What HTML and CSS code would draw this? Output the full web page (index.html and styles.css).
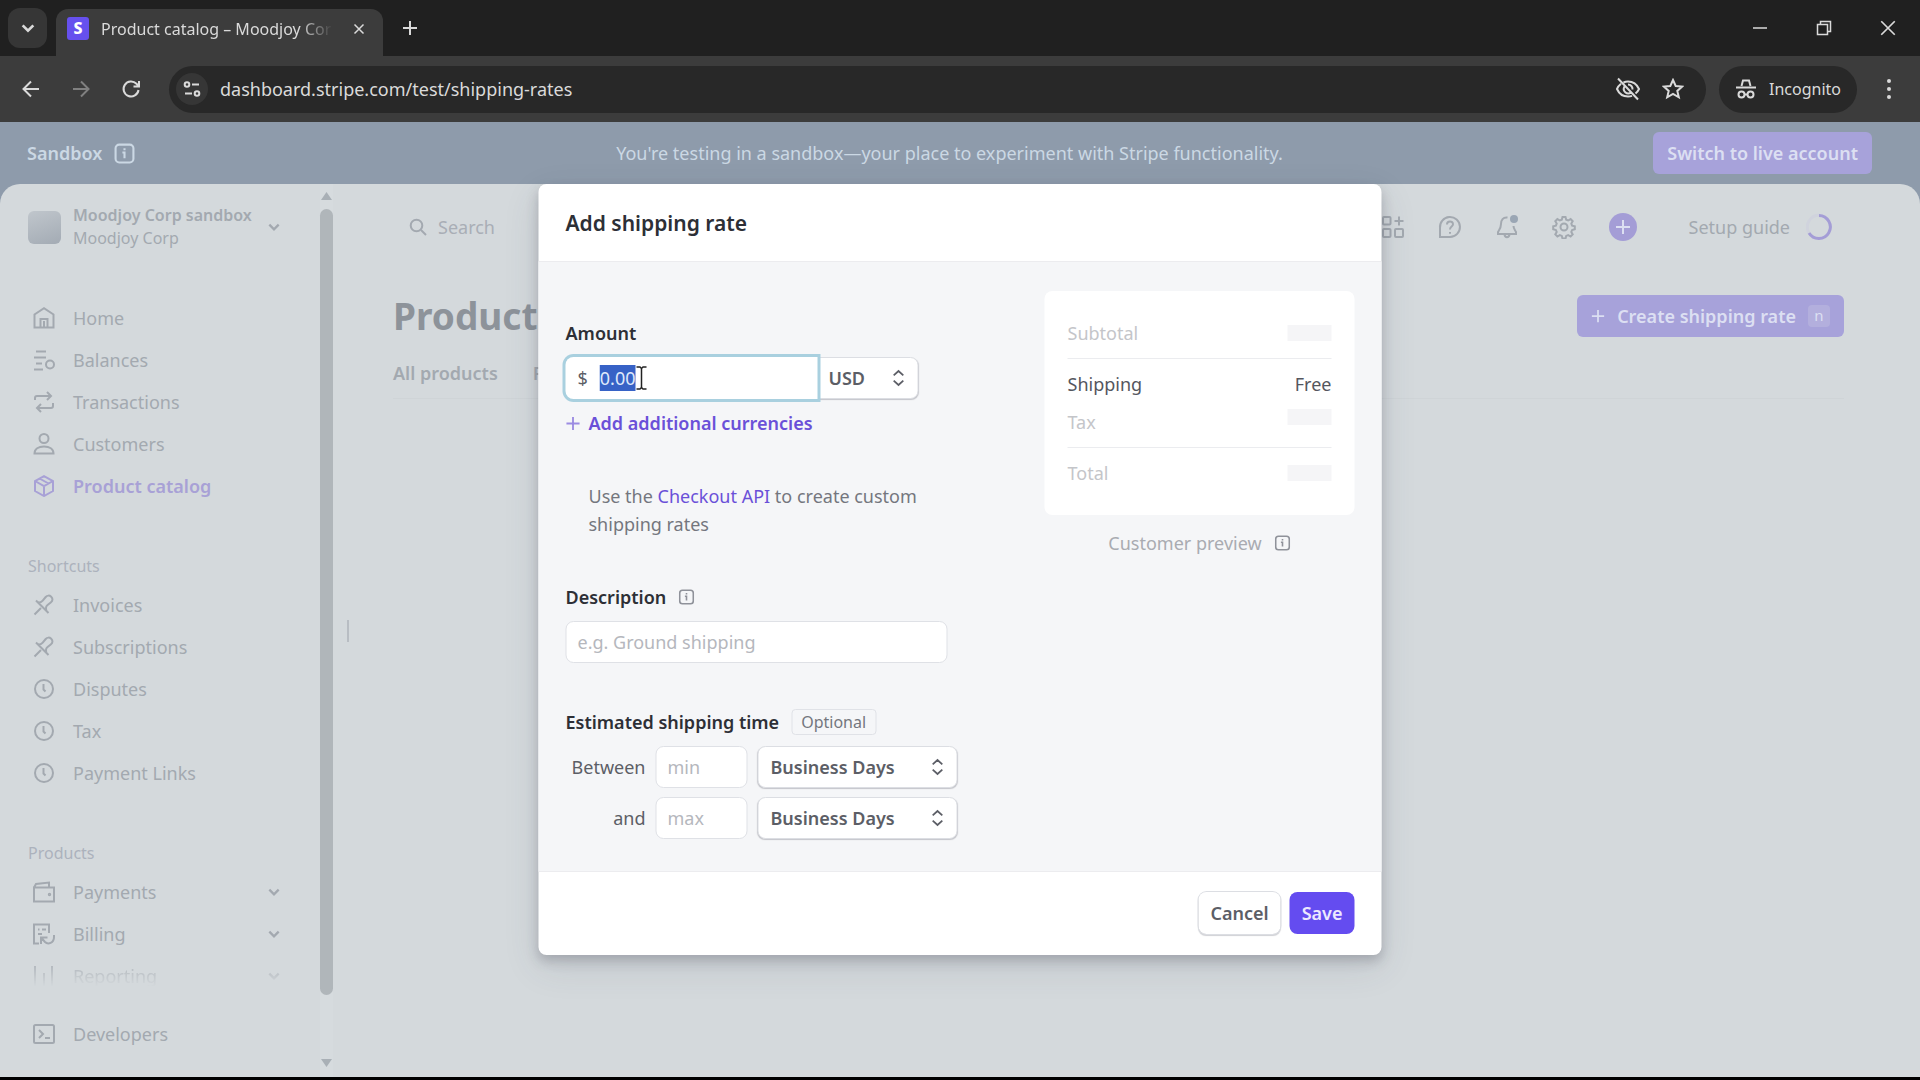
FILE: index.html
```
<!DOCTYPE html>
<html lang="en">
<head>
    <meta charset="UTF-8">
    <meta name="viewport" content="width=device-width, initial-scale=1.0">
    <title>Product catalog – Moodjoy Corp</title>
    <link rel="stylesheet" href="styles.css">
</head>
<body>
    <!-- shared icons -->
    <svg class="sprite" aria-hidden="true">
        <symbol id="i-chevron" viewBox="0 0 12 12"><path d="M2 4l4 4 4-4"/></symbol>
        <symbol id="i-updown" viewBox="0 0 16 20"><path d="M2.500 7L8 2l5.500 5M2.500 13L8 18l5.500-5"/></symbol>
        <symbol id="i-info" viewBox="0 0 20 20"><rect x="1.500" y="1.500" width="17" height="17" rx="3.500"/><path d="M8 9h2v5.500M10 5v1.800"/></symbol>
        <symbol id="i-plus" viewBox="0 0 16 16"><path d="M8 1v14M1 8h14"/></symbol>
        <symbol id="i-x" viewBox="0 0 16 16"><path d="M2 2l12 12M14 2L2 14"/></symbol>
        <symbol id="i-pin" viewBox="0 0 22 22"><path d="M1.500 20.500l6.500-6.500M3 6.500l12.500 12.500M4.500 8c2 .8 4 .2 5.200-1.300l3-3.700c1.500-1.800 3.800-1.800 5.500-.2s1.700 4-.2 5.500l-3.700 3c-1.500 1.200-1.500 3.700-.8 6"/></symbol>
        <symbol id="i-clock" viewBox="0 0 22 22"><circle cx="11" cy="11" r="9"/><path d="M10.500 6v5.500l2 2"/></symbol>
    </svg>

    <header class="browser">
        <div class="tab-strip">
            <button class="tab-search" aria-label="Search tabs"><svg width="16" height="16"><use href="#i-chevron"/></svg></button>
            <div class="tab">
                <span class="favicon">S</span>
                <span class="tab-title">Product catalog – Moodjoy Corp</span>
                <button class="tab-close" aria-label="Close tab"><svg width="12" height="12"><use href="#i-x"/></svg></button>
            </div>
            <button class="new-tab" aria-label="New tab"><svg width="16" height="16"><use href="#i-plus"/></svg></button>
            <div class="window-controls">
                <button aria-label="Minimize"><svg width="16" height="16" viewBox="0 0 16 16"><path d="M1 8h14"/></svg></button>
                <button aria-label="Restore"><svg width="16" height="16" viewBox="0 0 16 16"><path d="M1.500 4.500h10v10h-10zM4.500 4V1.500h10v10H12"/></svg></button>
                <button aria-label="Close"><svg width="18" height="18"><use href="#i-x"/></svg></button>
            </div>
        </div>
        <div class="toolbar">
            <button aria-label="Back"><svg width="20" height="20" viewBox="0 0 20 20"><path d="M18 10H3M10 2.500L2.500 10l7.500 7.500"/></svg></button>
            <button class="off" aria-label="Forward"><svg width="20" height="20" viewBox="0 0 20 20"><path d="M2 10h15M10 2.500l7.500 7.500-7.500 7.500"/></svg></button>
            <button aria-label="Reload"><svg width="20" height="20" viewBox="0 0 20 20"><path d="M17.500 11a7.500 7.500 0 1 1-2-6.200L18 7.500M18 2v5.500h-5.500"/></svg></button>
            <div class="address">
                <span class="site-info"><svg width="20" height="20" viewBox="0 0 20 20"><circle cx="5" cy="5.500" r="2.300"/><path d="M10 5.500h7M3 14.500h7"/><circle cx="15" cy="14.500" r="2.300"/></svg></span>
                <input class="url" type="text" aria-label="Address" value="dashboard.stripe.com/test/shipping-rates">
                <svg class="eye" width="26" height="24" viewBox="0 0 26 24"><path d="M8.500 5.500C10 4.800 11.500 4.500 13 4.500c5 0 9 3 11 7.500-.8 1.800-2 3.300-3.500 4.500M17 18.800c-1.200.5-2.600.7-4 .7-5 0-9-3-11-7.500C3 9.700 4.500 8 6 6.800M9.500 9.500a4.500 4.500 0 0 0 6.500 6M13 7.500a4.500 4.500 0 0 1 4.500 5M3 1.500l20 21"/></svg>
                <svg width="22" height="22" viewBox="0 0 22 22"><path d="M11 2l2.700 6 6.500.6-4.900 4.300 1.500 6.400-5.800-3.400-5.800 3.400 1.500-6.400L1.800 8.600l6.500-.6z"/></svg>
            </div>
            <div class="incognito">
                <svg width="22" height="22" viewBox="0 0 22 22"><path d="M6.500 8L8 2.500h6L15.500 8M1 9.500h20"/><circle cx="6.500" cy="16.500" r="3"/><circle cx="15.500" cy="16.500" r="3"/><path d="M9.500 16.500h3"/></svg>
                Incognito
            </div>
            <button class="more" aria-label="Menu"><svg width="6" height="22" viewBox="0 0 6 22"><circle cx="3" cy="3" r="2"/><circle cx="3" cy="11" r="2"/><circle cx="3" cy="19" r="2"/></svg></button>
        </div>
    </header>

    <div class="banner">
        <div class="banner-label">Sandbox <svg width="21" height="21"><use href="#i-info"/></svg></div>
        <p>You're testing in a sandbox—your place to experiment with Stripe functionality.</p>
        <button class="faded-button">Switch to live account</button>
    </div>

    <div class="page">
        <div class="app">
            <aside class="sidebar">
                <nav class="side-nav">
                    <button class="account">
                        <span class="avatar"></span>
                        <span class="account-name"><strong>Moodjoy Corp sandbox</strong><span>Moodjoy Corp</span></span>
                        <svg class="chevron" width="14" height="14"><use href="#i-chevron"/></svg>
                    </button>
                    <div class="group">
                        <a href="#"><svg width="22" height="22" viewBox="0 0 22 22"><path d="M1.500 20.500V7.500L11 1.200l9.500 6.300v13zM7.500 20v-8h7v8M11 14v6"/></svg>Home</a>
                        <a href="#"><svg width="22" height="22" viewBox="0 0 22 22"><path d="M3 2.500h10M1 8.500h12M3 14.500h6M1 20.500h9"/><circle cx="17" cy="15.500" r="4"/></svg>Balances</a>
                        <a href="#"><svg width="22" height="22" viewBox="0 0 22 22"><path d="M2 9V7q0-2 2-2h14M14 1l4 4-4 4M20 12v3q0 2-2 2H4M8 13l-4 4 4 4"/></svg>Transactions</a>
                        <a href="#"><svg width="22" height="22" viewBox="0 0 22 22"><circle cx="11" cy="5.500" r="4.500"/><path d="M1.500 20.500c0-4.500 4-7 9.500-7s9.500 2.500 9.500 7z"/></svg>Customers</a>
                        <a href="#" class="active"><svg width="22" height="22" viewBox="0 0 22 22"><path d="M11 1.200l9 4.800v10l-9 5-9-5V6zM2 6l9 5 9-5M11 11v10M6.500 3.500l9 5"/></svg>Product catalog</a>
                    </div>
                    <div class="group">
                        <h2>Shortcuts</h2>
                        <a href="#"><svg width="22" height="22"><use href="#i-pin"/></svg>Invoices</a>
                        <a href="#"><svg width="22" height="22"><use href="#i-pin"/></svg>Subscriptions</a>
                        <a href="#"><svg width="22" height="22"><use href="#i-clock"/></svg>Disputes</a>
                        <a href="#"><svg width="22" height="22"><use href="#i-clock"/></svg>Tax</a>
                        <a href="#"><svg width="22" height="22"><use href="#i-clock"/></svg>Payment Links</a>
                    </div>
                    <div class="group">
                        <h2>Products</h2>
                        <a href="#"><svg width="22" height="22" viewBox="0 0 22 22"><path d="M1 6.500h20v14H1zM1 6.500l2-3.500 13-1.500v5"/><circle cx="16.500" cy="13.500" r=".7"/></svg>Payments<svg class="chevron" width="14" height="14"><use href="#i-chevron"/></svg></a>
                        <a href="#"><svg width="22" height="22" viewBox="0 0 22 22"><path d="M6 20.500H1V1.500h15V10M5 6.500h1.500M9 6.500h4M5 11h4M8 21v-6.500h6.500M8.500 15l3.500 4c3 3 9 1 9-5v-2"/></svg>Billing<svg class="chevron" width="14" height="14"><use href="#i-chevron"/></svg></a>
                        <a href="#" class="fading"><svg width="22" height="22" viewBox="0 0 22 22"><path d="M2 1v20M11 8v13M19 1v20"/></svg>Reporting<svg class="chevron" width="14" height="14"><use href="#i-chevron"/></svg></a>
                    </div>
                    <a href="#" class="developers"><svg width="22" height="22" viewBox="0 0 22 22"><rect x="1" y="2" width="20" height="18" rx="1.500"/><path d="M6 7l4 4-4 4M12 15h5"/></svg>Developers</a>
                </nav>
                <div class="scrollbar">
                    <svg width="11" height="8" viewBox="0 0 11 8"><path d="M5.500 0L11 8H0z"/></svg>
                    <div class="thumb"></div>
                    <svg class="down" width="11" height="8" viewBox="0 0 11 8"><path d="M5.500 8L11 0H0z"/></svg>
                </div>
                <div class="resizer"></div>
            </aside>

            <main>
                <div class="topbar">
                    <label class="search">
                        <svg width="18" height="18" viewBox="0 0 18 18"><circle cx="7.500" cy="7.500" r="5.800"/><path d="M12 12l5 5"/></svg>
                        <input type="text" placeholder="Search">
                    </label>
                    <button class="icon-button" aria-label="Apps"><svg width="24" height="24" viewBox="0 0 24 24"><rect x="2" y="2" width="7.500" height="7.500" rx="1"/><rect x="2" y="14" width="7.500" height="8" rx="1"/><rect x="14" y="14" width="8" height="8" rx="1"/><path d="M18 1.500v9M13.500 6h9"/></svg></button>
                    <button class="icon-button" aria-label="Help"><svg width="24" height="24" viewBox="0 0 24 24"><path d="M2 22v-9A10 10 0 1 1 12 22zM9 9.500c0-4 6-4 6-.3 0 2.500-3 2.300-3 5.300M12 17v1.800"/></svg></button>
                    <button class="icon-button" aria-label="Notifications"><svg width="24" height="24" viewBox="0 0 24 24"><path d="M12.500 2.500C8 2 6 5 6 9c0 4-1.500 5.500-3 8v2h18v-2c-1-2-2.500-3.500-2.500-6M9.500 19.500c.5 3.500 4.500 3.500 5 0"/><circle class="dot" cx="19" cy="4" r="4"/></svg></button>
                    <button class="icon-button" aria-label="Settings"><svg width="24" height="24" viewBox="0 0 24 24"><circle cx="12" cy="12" r="3.500"/><path d="M10.500 2h3l.7 2.700 2 .8 2.400-1.400 2.100 2.100-1.400 2.400.8 2 2.700.7v3l-2.700.7-.8 2 1.400 2.400-2.100 2.100-2.400-1.400-2 .8-.7 2.700h-3l-.7-2.700-2-.8-2.400 1.400-2.100-2.100 1.400-2.400-.8-2L1.200 14.300v-3l2.700-.7.8-2-1.400-2.400 2.100-2.100 2.400 1.400 2-.8z"/></svg></button>
                    <button class="create-round" aria-label="Create"><svg width="16" height="16"><use href="#i-plus"/></svg></button>
                    <button class="setup">Setup guide <svg width="26" height="28" viewBox="0 0 26 28"><path class="ring-track" d="M13 2a12 12 0 0 0-10 18"/><path d="M13 2.500a11.500 11.500 0 1 1-10 17.500"/></svg></button>
                </div>
                <div class="heading">
                    <h1>Product catalog</h1>
                    <button class="faded-button create"><svg width="14" height="14"><use href="#i-plus"/></svg>Create shipping rate <kbd>n</kbd></button>
                </div>
                <div class="tabs">
                    <a href="#">All products</a>
                    <a href="#">Features</a>
                </div>
            </main>
        </div>

        <form class="modal" role="dialog" aria-labelledby="modal-title">
            <div class="modal-header"><h2 id="modal-title">Add shipping rate</h2></div>
            <div class="modal-body">
                <div class="fields">
                    <div class="field">
                        <label for="amount">Amount</label>
                        <div class="amount-row">
                            <div class="amount-box">
                                <span>$</span>
                                <input id="amount" type="text" value="0.00" autofocus>
                                <svg class="ibeam" width="12" height="24" viewBox="0 0 12 24"><path d="M1 1h3.500L6 2.500 7.500 1H11M1 23h3.500L6 21.500 7.500 23H11M6 2.500v19"/></svg>
                            </div>
                            <div class="select currency">
                                <select aria-label="Currency"><option>USD</option></select>
                                <svg width="14" height="18"><use href="#i-updown"/></svg>
                            </div>
                        </div>
                        <a href="#" class="add-link"><svg width="15" height="15"><use href="#i-plus"/></svg>Add additional currencies</a>
                    </div>

                    <p class="hint">Use the <a href="#">Checkout API</a> to create custom shipping rates</p>

                    <div class="field">
                        <div class="label-row">
                            <label for="description">Description</label>
                            <svg class="info" width="16" height="16"><use href="#i-info"/></svg>
                        </div>
                        <input id="description" class="text-input" type="text" placeholder="e.g. Ground shipping">
                    </div>

                    <div class="field">
                        <div class="label-row">
                            <span class="label">Estimated shipping time</span>
                            <span class="badge">Optional</span>
                        </div>
                        <div class="time-grid">
                            <label for="min">Between</label>
                            <input id="min" class="text-input" type="text" placeholder="min">
                            <div class="select">
                                <select aria-label="Minimum unit"><option>Business Days</option></select>
                                <svg width="14" height="18"><use href="#i-updown"/></svg>
                            </div>
                            <label for="max">and</label>
                            <input id="max" class="text-input" type="text" placeholder="max">
                            <div class="select">
                                <select aria-label="Maximum unit"><option>Business Days</option></select>
                                <svg width="14" height="18"><use href="#i-updown"/></svg>
                            </div>
                        </div>
                    </div>
                </div>

                <div class="preview">
                    <div class="receipt">
                        <div class="line">Subtotal <i></i></div>
                        <hr>
                        <div class="line strong">Shipping <span>Free</span></div>
                        <div class="line">Tax <i></i></div>
                        <hr>
                        <div class="line">Total <i></i></div>
                    </div>
                    <div class="caption">Customer preview <svg class="info" width="16" height="16"><use href="#i-info"/></svg></div>
                </div>
            </div>
            <div class="modal-footer">
                <button type="button" class="cancel">Cancel</button>
                <button type="button" class="save">Save</button>
            </div>
        </form>
    </div>

    <script>
        // the amount is preselected so typing replaces it
        const amount = document.getElementById('amount');
        amount.focus();
        amount.select();
    </script>
</body>
</html>
```
FILE: styles.css
```
* {
    box-sizing: border-box;
}
body {
    margin: 0;
    min-height: 100vh;
    display: flex;
    flex-direction: column;
    padding-bottom: 3px;
    background: #000;
    font-family: "Noto Sans", "Open Sans", sans-serif;
    font-size: 18px;
    line-height: 26px;
}
h1, h2, p {
    margin: 0;
}
button, input, select {
    font: inherit;
    color: inherit;
}
button {
    display: flex;
    align-items: center;
    justify-content: center;
    padding: 0;
    border: none;
    background: none;
    cursor: pointer;
    white-space: nowrap;
}
input {
    min-width: 0;
    border: none;
    outline: none;
    background: none;
    padding: 0;
}
a {
    text-decoration: none;
    color: inherit;
}
svg {
    flex: none;
    fill: none;
    stroke: currentColor;
    stroke-width: 2;
}
.sprite {
    position: absolute;
    width: 0;
    height: 0;
}

/* browser window */
.browser {
    background: #3c3c3c;
    color: #dadada;
}
.tab-strip {
    display: flex;
    align-items: center;
    height: 56px;
    padding-left: 8px;
    background: #202020;
}
.tab-search {
    width: 39px;
    height: 40px;
    border-radius: 12px;
    background: #363636;
}
.tab {
    display: flex;
    align-items: center;
    align-self: flex-end;
    width: 327px;
    height: 47px;
    margin-left: 9px;
    padding: 0 18px 8px 11px;
    border-radius: 12px 12px 0 0;
    background: #3c3c3c;
    font-size: 16px;
}
.favicon {
    width: 22px;
    height: 23px;
    border-radius: 3px;
    background: #6650ee;
    color: #fff;
    font-weight: 800;
    line-height: 22px;
    text-align: center;
}
.tab-title {
    flex: 1;
    margin: 0 20px 0 12px;
    overflow: hidden;
    white-space: nowrap;
    mask-image: linear-gradient(to right, #000 85%, transparent);
}
.new-tab {
    margin-left: 19px;
}
.window-controls {
    display: flex;
    margin-left: auto;
}
.window-controls button {
    width: 64px;
    height: 56px;
}
.window-controls svg {
    stroke-width: 1.5;
}
.toolbar {
    display: flex;
    align-items: center;
    height: 66px;
    padding: 0 28px 0 21px;
}
.toolbar > button {
    width: 20px;
    margin-right: 30px;
}
.toolbar .off {
    color: #808080;
}
.address {
    flex: 1;
    display: flex;
    align-items: center;
    height: 47px;
    margin-left: -2px;
    padding: 0 22px 0 7px;
    border-radius: 24px;
    background: #282828;
}
.site-info {
    display: flex;
    align-items: center;
    justify-content: center;
    width: 32px;
    height: 32px;
    margin-right: 12px;
    border-radius: 50%;
    background: #363636;
}
.url {
    flex: 1;
}
.eye {
    margin-right: 21px;
}
.incognito {
    display: flex;
    align-items: center;
    gap: 12px;
    height: 47px;
    margin-left: 13px;
    padding: 0 16px;
    border-radius: 24px;
    background: #282828;
    font-size: 16px;
}
.toolbar .more {
    width: 6px;
    margin: 0 0 0 29px;
}
.more svg {
    fill: currentColor;
    stroke: none;
}

/* sandbox banner */
.banner {
    display: grid;
    grid-template-columns: 1fr auto 1fr;
    align-items: center;
    height: 62px;
    padding: 0 48px 0 27px;
    background: #8e9bab;
    color: #cbd8e4;
}
.banner-label {
    display: flex;
    align-items: center;
    gap: 12px;
    font-weight: 600;
}
.faded-button {
    height: 42px;
    padding: 0 14px;
    border-radius: 6px;
    background: #a7a2da;
    color: #dcdff2;
    font-weight: 600;
}
.banner .faded-button {
    justify-self: end;
}

/* dimmed dashboard */
.page {
    flex: 1;
    display: flex;
    position: relative;
    background: #8e9bab;
}
.app {
    flex: 1;
    display: flex;
    border-radius: 20px 20px 0 0;
    background: #d4d9dc;
    color: #a3a9b0;
}
.sidebar {
    display: flex;
    width: 350px;
}
.side-nav {
    display: flex;
    flex-direction: column;
    width: 320px;
    padding: 20px 39px 0 28px;
}
.account {
    gap: 12px;
    text-align: left;
}
.avatar {
    width: 33px;
    height: 33px;
    border-radius: 6px;
    background: linear-gradient(160deg, #c0c6cc, #a3abb4);
}
.account-name {
    flex: 1;
    display: flex;
    flex-direction: column;
    font-size: 16px;
    line-height: 23px;
}
.account-name strong {
    font-weight: 600;
}
.group {
    margin-top: 47px;
}
.group h2 {
    margin-bottom: 6px;
    color: #acb2bc;
    font-size: 16px;
    font-weight: 400;
    line-height: 24px;
}
.side-nav a {
    display: flex;
    align-items: center;
    gap: 18px;
    height: 42px;
    padding-left: 5px;
}
.side-nav .active {
    color: #a8a1d6;
    font-weight: 600;
}
.side-nav .chevron {
    margin-left: auto;
}
.side-nav .fading {
    mask-image: linear-gradient(#000, transparent 75%);
}
.side-nav .developers {
    margin-top: 16px;
}
.scrollbar {
    display: flex;
    flex-direction: column;
    align-items: center;
    width: 13px;
    padding: 8px 0 10px;
    background: #d6dbde;
}
.scrollbar svg {
    fill: #a9b0b6;
    stroke: none;
}
.scrollbar .thumb {
    width: 13px;
    height: 786px;
    margin-top: 9px;
    border-radius: 7px;
    background: #b0b6ba;
}
.scrollbar .down {
    margin-top: auto;
}
.resizer {
    align-self: center;
    width: 2px;
    height: 22px;
    margin-left: 14px;
    background: #b8bdc3;
}
main {
    flex: 1;
    padding: 20px 76px 0 43px;
}
.topbar {
    display: flex;
    align-items: center;
    gap: 33px;
    height: 46px;
}
.search {
    display: flex;
    align-items: center;
    gap: 11px;
    flex: 1;
    padding-left: 16px;
    border-radius: 8px;
}
.search input::placeholder {
    color: #a9aeb6;
}
.icon-button {
    width: 24px;
}
.icon-button .dot {
    fill: #9aa6b4;
    stroke: none;
}
.create-round {
    width: 28px;
    height: 28px;
    border-radius: 50%;
    background: #a49dd6;
    color: #dcdff2;
}
.setup {
    gap: 16px;
    margin-left: 19px;
    padding-right: 12px;
}
.setup svg {
    stroke: #a49dd6;
    stroke-width: 3;
}
.setup .ring-track {
    stroke: #d0d3dd;
}
.heading {
    display: flex;
    align-items: center;
    justify-content: space-between;
    height: 44px;
    margin-top: 44px;
}
.heading h1 {
    color: #8d939a;
    font-size: 37px;
    font-weight: 700;
    line-height: 44px;
}
.create {
    gap: 12px;
}
.create kbd {
    width: 22px;
    height: 22px;
    border-radius: 4px;
    background: #b3afdd;
    font: inherit;
    font-size: 15px;
    font-weight: 400;
    line-height: 21px;
}
.tabs {
    display: flex;
    gap: 35px;
    margin-top: 22px;
    padding-bottom: 12px;
    border-bottom: 1px solid #cfd4d7;
    font-weight: 600;
}

/* dialog */
.modal {
    position: absolute;
    top: 0;
    left: 50%;
    width: 843px;
    transform: translateX(-50%);
    border-radius: 8px;
    background: #fff;
    color: #5c5e66;
    box-shadow: 0 6px 12px rgba(60, 60, 70, 0.25), 0 12px 36px rgba(60, 66, 87, 0.12);
}
.modal-header {
    padding: 26px 27px 25px;
    border-bottom: 1px solid #ececef;
}
.modal-header h2 {
    color: #2d2f36;
    font-size: 21px;
    font-weight: 600;
}
.modal-body {
    display: flex;
    justify-content: space-between;
    padding: 29px 27px 32px 27px;
    background: #f5f6f8;
}
.fields {
    display: flex;
    flex-direction: column;
    gap: 46px;
    width: 394px;
    padding-top: 29px;
}
.field {
    display: flex;
    flex-direction: column;
    gap: 11px;
}
.field > label, .label-row label, .label {
    color: #2d2f36;
    font-weight: 600;
}
.label-row {
    display: flex;
    align-items: center;
    gap: 12px;
}
.info {
    color: #8f929a;
}
.amount-row {
    display: flex;
}
.amount-box {
    display: flex;
    align-items: center;
    gap: 12px;
    position: relative;
    width: 252px;
    height: 42px;
    padding-left: 12px;
    border-radius: 8px 0 0 8px;
    background: #fff;
    box-shadow: 0 0 0 3px #a9d0df;
    z-index: 1;
}
.amount-box input {
    flex: 1;
}
.amount-box input::selection {
    background: #3762c6;
    color: #dfe9fb;
}
.ibeam {
    position: absolute;
    top: 9px;
    left: 70px;
    stroke: #222;
    stroke-width: 1.5;
}
.select {
    display: flex;
    position: relative;
    height: 42px;
}
.select select {
    width: 100%;
    padding: 0 12px;
    appearance: none;
    border: 1px solid #dcdee3;
    border-radius: 8px;
    background: #fff;
    box-shadow: 0 1px 1px #c4c5ca;
    font-weight: 600;
}
.select svg {
    position: absolute;
    top: 12px;
    right: 13px;
    pointer-events: none;
}
.currency select {
    width: 101px;
    padding: 0 10px;
    border-radius: 0 8px 8px 0;
}
.add-link {
    display: flex;
    align-items: center;
    gap: 8px;
    color: #6a50d8;
    font-weight: 600;
}
.add-link svg {
    stroke: #9c8ce2;
}
.hint {
    padding-left: 23px;
    color: #74767e;
    line-height: 28px;
}
.hint a {
    color: #6a50d8;
}
.text-input {
    width: 100%;
    height: 42px;
    padding: 0 11px;
    border: 1px solid #dfe1e6;
    border-radius: 8px;
    background: #fff;
}
.text-input::placeholder {
    color: #b5b7bd;
}
#description {
    width: 382px;
}
.badge {
    padding: 0 9px;
    border: 1px solid #e0e2e7;
    border-radius: 4px;
    color: #74767e;
    font-size: 16px;
    line-height: 24px;
}
.time-grid {
    display: grid;
    grid-template-columns: 80px 92px 200px;
    align-items: center;
    gap: 9px 10px;
}
.time-grid label {
    text-align: right;
}
.preview {
    width: 310px;
}
.receipt {
    height: 224px;
    padding: 29px 23px;
    border-radius: 8px;
    background: #fff;
}
.line {
    display: flex;
    align-items: center;
    justify-content: space-between;
    color: #c4c5c9;
}
.line i {
    width: 44px;
    height: 16px;
    background: #f5f5f7;
}
.strong {
    margin-bottom: 12px;
    color: #54565e;
}
.strong + .line i {
    align-self: flex-start;
}
.receipt hr {
    height: 1px;
    margin: 12px 0;
    border: none;
    background: #ebecef;
}
.caption {
    display: flex;
    align-items: center;
    justify-content: center;
    gap: 13px;
    margin-top: 15px;
    color: #a9abb1;
}
.modal-footer {
    display: flex;
    justify-content: flex-end;
    gap: 9px;
    padding: 20px 27px 21px;
    border-top: 1px solid #ececef;
}
.modal-footer button {
    height: 42px;
    padding: 0 12px;
    border-radius: 8px;
    font-weight: 600;
}
.cancel {
    box-shadow: 0 0 0 1px #dcdee3, 0 2px 1px #d0d1d5;
}
.save {
    background: #644cf0;
    color: #ece9ff;
}
```
